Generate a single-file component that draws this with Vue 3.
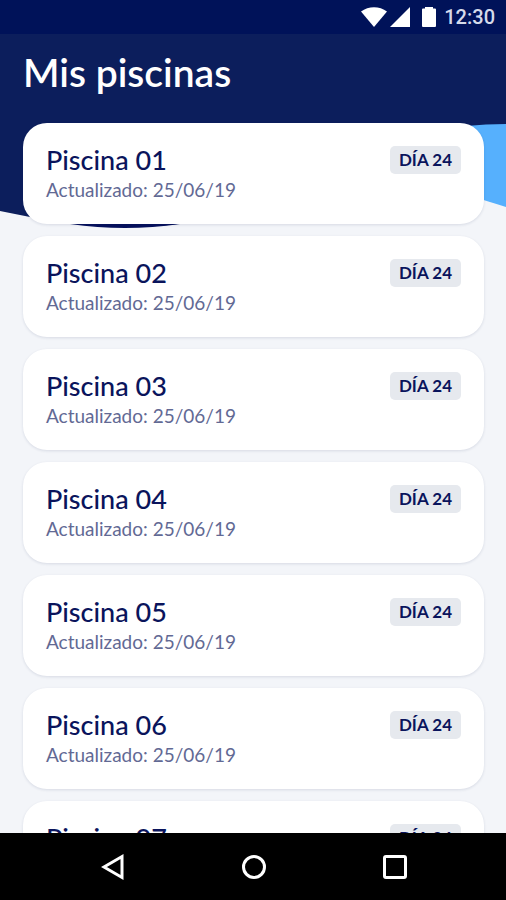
<script setup>
import { ref } from 'vue'

const time = ref('12:30')

const pools = ref(
  Array.from({ length: 7 }, (_, i) => ({
    id: i + 1,
    name: `Piscina ${String(i + 1).padStart(2, '0')}`,
    updated: '25/06/19',
    day: 24
  }))
)
</script>

<template>
  <div class="screen">
    <div class="status-bar">
      <svg class="wifi" viewBox="0 0 26 20" aria-hidden="true"><path d="M0 4.5C7.5-1.2 18.500-1.200 26 4.500L13 20Z" /></svg>
      <svg class="signal" viewBox="0 0 20 20" aria-hidden="true"><path d="M20 0V20H0Z" /></svg>
      <svg class="battery" viewBox="0 0 14 20" aria-hidden="true"><path d="M3 0h8v1.500h2q1 0 1 1v16.500q0 1-1 1h-12Q0 20 0 19v-16.500Q0 1.500 1 1.500H3Z" /></svg>
      <span class="time">{{ time }}</span>
    </div>

    <main class="content">
      <!-- waves behind the first card -->
      <svg class="waves" viewBox="0 0 506 196" preserveAspectRatio="none" aria-hidden="true">
        <path fill="#56b0fd" d="M440 84H506V173C480 165 460 158 440 154Z" />
        <path fill="#0c1e5c" d="M0 0H506V90Q486 90 466 92C390 108 290 193 125 193C80 193 40 185 0 177Z" />
        <path fill="#05105c" d="M70 190Q125 198 180 190Z" />
      </svg>

      <h1 class="title">Mis piscinas</h1>

      <ul class="pools">
        <li v-for="pool in pools" :key="pool.id" class="pool-card">
          <div class="info">
            <h2 class="name">{{ pool.name }}</h2>
            <p class="updated">Actualizado: {{ pool.updated }}</p>
          </div>
          <span class="day">DÍA {{ pool.day }}</span>
        </li>
      </ul>
    </main>

    <nav class="nav-bar">
      <button type="button" aria-label="Atrás">
        <svg viewBox="0 0 28 28"><path d="M23 3.500V24.500L5 14Z" /></svg>
      </button>
      <button type="button" aria-label="Inicio">
        <svg viewBox="0 0 28 28"><circle cx="14" cy="14" r="10.500" /></svg>
      </button>
      <button type="button" aria-label="Recientes">
        <svg viewBox="0 0 28 28"><rect x="3.500" y="3.500" width="21" height="21" rx="1.500" /></svg>
      </button>
    </nav>
  </div>
</template>

<style>
body {
  margin: 0;
  background: #f3f5f9;
}
</style>

<style scoped>
.screen {
  display: flex;
  flex-direction: column;
  height: 100vh;
  overflow: hidden;
  background: #f3f5f9;
  color: #0a145c;
  font-family: Lato, 'Liberation Sans', sans-serif;
}

.status-bar {
  display: flex;
  align-items: center;
  justify-content: flex-end;
  flex: none;
  height: 34px;
  padding-right: 11px;
  background: #001259;
  color: #d5daea;
}

.status-bar svg {
  height: 20px;
  fill: #fff;
}

.wifi {
  width: 26px;
  margin-right: 3px;
}

.signal {
  width: 20px;
  margin-right: 12px;
}

.battery {
  width: 14px;
  margin-right: 8px;
}

.time {
  font-family: Roboto, sans-serif;
  font-size: 20px;
  font-weight: 500;
  line-height: 20px;
}

.content {
  position: relative;
  flex: 1;
  min-height: 0;
  overflow: hidden;
}

.waves {
  position: absolute;
  top: 0;
  left: 0;
  width: 100%;
  height: 196px;
}

.title {
  position: relative;
  margin: 0;
  padding: 14px 23px 27px;
  color: #fff;
  font-size: 39px;
  font-weight: 600;
  line-height: 48px;
}

.pools {
  position: relative;
  display: flex;
  flex-direction: column;
  gap: 12px;
  margin: 0;
  padding: 0 22px 0 23px;
  list-style: none;
}

.pool-card {
  display: flex;
  align-items: flex-start;
  justify-content: space-between;
  padding: 21px 23px;
  border-radius: 24px;
  background: #fff;
  box-shadow: 0 1px 3px rgba(20, 30, 80, 0.12);
}

.name {
  margin: 0;
  font-size: 27px;
  font-weight: 500;
  line-height: 32px;
}

.updated {
  margin: 0;
  color: #626994;
  font-size: 19px;
  line-height: 27px;
}

.day {
  margin-top: 2px;
  padding: 0 9px;
  border-radius: 5px;
  background: #e6e9ee;
  font-size: 17px;
  font-weight: 700;
  line-height: 28px;
}

.nav-bar {
  display: grid;
  grid-template-columns: repeat(3, 1fr);
  justify-items: center;
  align-items: center;
  flex: none;
  height: 67px;
  padding: 0 40px 0 42px;
  background: #000;
}

.nav-bar button {
  display: flex;
  padding: 10px;
  border: 0;
  background: none;
}

.nav-bar svg {
  width: 28px;
  height: 28px;
  fill: none;
  stroke: #fff;
  stroke-width: 3;
}
</style>
